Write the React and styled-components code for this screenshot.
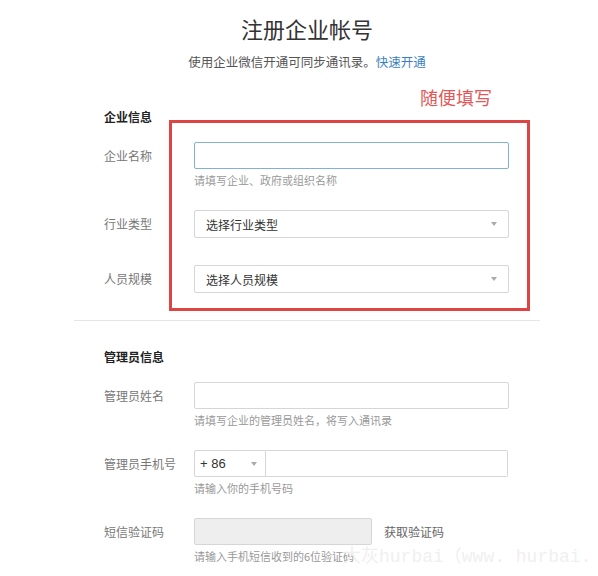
import React from "react";
import styled, { createGlobalStyle } from "styled-components";

const GlobalStyle = createGlobalStyle`
  html, body { margin: 0; padding: 0; background: #fff; }
  body { font-family: "Noto Sans CJK SC", "Noto Sans", sans-serif; }
  * { box-sizing: border-box; }
`;

const Page = styled.div`
  position: relative;
  width: 598px;
  height: 576px;
  overflow: hidden;
  background: #fff;
`;

const Form = styled.div`
  width: 466px;
  margin-left: 74px;
  padding-top: 13px;
`;

const Title = styled.h1`
  margin: 0;
  font-size: 22px;
  line-height: 30px;
  font-weight: 400;
  color: #333;
  text-align: center;
`;

const Subtitle = styled.p`
  margin: 9px 0 0;
  font-size: 12.5px;
  line-height: 20px;
  color: #555;
  text-align: center;
`;

const Link = styled.a`
  color: #3b7fc4;
  text-decoration: none;
`;

const Section = styled.section`
  position: relative;
  padding-top: ${(p) => p.$top}px;
`;

const SectionHead = styled.h2`
  margin: 0 0 15px;
  padding-left: 30px;
  font-size: 12px;
  line-height: 20px;
  font-weight: 700;
  color: #222;
`;

const FieldRow = styled.div`
  display: grid;
  grid-template-columns: 90px 315px;
  padding-left: 30px;
  margin-bottom: ${(p) => (p.$hasHelp ? 22 : 27)}px;
`;

const Label = styled.label`
  font-size: 12px;
  line-height: 27px;
  color: #777;
  white-space: nowrap;
`;

const Help = styled.div`
  grid-column: 2;
  margin-top: 3px;
  font-size: 11px;
  line-height: 16px;
  color: #999;
`;

const TextInput = styled.input`
  display: block;
  width: ${(p) => p.$width || "315px"};
  height: 27px;
  margin: 0;
  border: 1px solid ${(p) => (p.$focused ? "#7fb3cf" : "#d6d6d6")};
  border-radius: 2px;
  background: ${(p) => (p.$disabled ? "#eeeeee" : "#fff")};
  outline: none;
  font: inherit;
`;

const Select = styled.div`
  display: flex;
  align-items: center;
  justify-content: space-between;
  height: 28px;
  padding: 0 11px;
  border: 1px solid #d6d6d6;
  border-radius: 2px;
  font-size: 12px;
  color: #333;
`;

const Caret = styled.span`
  width: 0;
  height: 0;
  border-left: 3.5px solid transparent;
  border-right: 3.5px solid transparent;
  border-top: 4px solid #aaa;
`;

const PhoneGroup = styled.div`
  display: flex;
  width: 314px;
  height: 27px;
`;

const Country = styled.div`
  display: flex;
  align-items: center;
  justify-content: space-between;
  width: 72px;
  padding: 0 8px 0 5px;
  border: 1px solid #d6d6d6;
  border-radius: 2px 0 0 2px;
  font-family: "Liberation Sans", Arial, sans-serif;
  font-size: 13px;
  color: #333;
`;

const PhoneInput = styled.input`
  flex: 1;
  height: 27px;
  margin: 0;
  border: 1px solid #d6d6d6;
  border-left: none;
  border-radius: 0 2px 2px 0;
  outline: none;
`;

const CodeGroup = styled.div`
  display: flex;
  align-items: center;
`;

const CodeButton = styled.span`
  margin-left: 12px;
  font-size: 12px;
  color: #666;
`;

const Divider = styled.hr`
  margin: 3px 0 0;
  border: none;
  height: 1px;
  background: #e6e6e6;
`;

const RedBox = styled.div`
  position: absolute;
  left: 95px;
  top: 48px;
  width: 361px;
  height: 191px;
  border: 3px solid #dd4545;
  pointer-events: none;
`;

const Note = styled.div`
  position: absolute;
  left: 346px;
  top: 13px;
  font-size: 18px;
  line-height: 24px;
  color: #e25858;
`;

const Watermark = styled.div`
  position: absolute;
  left: 343px;
  top: 546px;
  font-family: "Liberation Mono", "Noto Sans CJK SC", monospace;
  font-size: 18px;
  line-height: 22px;
  color: #f0f0f0;
  white-space: nowrap;
  pointer-events: none;
`;

export default function App() {
  return (
    <Page>
      <GlobalStyle />
      <Form>
        <Title>注册企业帐号</Title>
        <Subtitle>
          使用企业微信开通可同步通讯录。<Link href="#">快速开通</Link>
        </Subtitle>

        <Section $top={35}>
          <Note>随便填写</Note>
          <SectionHead>企业信息</SectionHead>
          <FieldRow $hasHelp>
            <Label>企业名称</Label>
            <TextInput $focused />
            <Help>请填写企业、政府或组织名称</Help>
          </FieldRow>
          <FieldRow>
            <Label>行业类型</Label>
            <Select>
              选择行业类型
              <Caret />
            </Select>
          </FieldRow>
          <FieldRow>
            <Label>人员规模</Label>
            <Select>
              选择人员规模
              <Caret />
            </Select>
          </FieldRow>
          <RedBox />
        </Section>

        <Divider />

        <Section $top={26}>
          <SectionHead>管理员信息</SectionHead>
          <FieldRow $hasHelp>
            <Label>管理员姓名</Label>
            <TextInput />
            <Help>请填写企业的管理员姓名，将写入通讯录</Help>
          </FieldRow>
          <FieldRow $hasHelp>
            <Label>管理员手机号</Label>
            <PhoneGroup>
              <Country>
                + 86
                <Caret />
              </Country>
              <PhoneInput />
            </PhoneGroup>
            <Help>请输入你的手机号码</Help>
          </FieldRow>
          <FieldRow $hasHelp>
            <Label>短信验证码</Label>
            <CodeGroup>
              <TextInput $width="178px" $disabled disabled />
              <CodeButton>获取验证码</CodeButton>
            </CodeGroup>
            <Help>请输入手机短信收到的6位验证码</Help>
          </FieldRow>
        </Section>
      </Form>
      <Watermark>大灰hurbai（www. hurbai.</Watermark>
    </Page>
  );
}
